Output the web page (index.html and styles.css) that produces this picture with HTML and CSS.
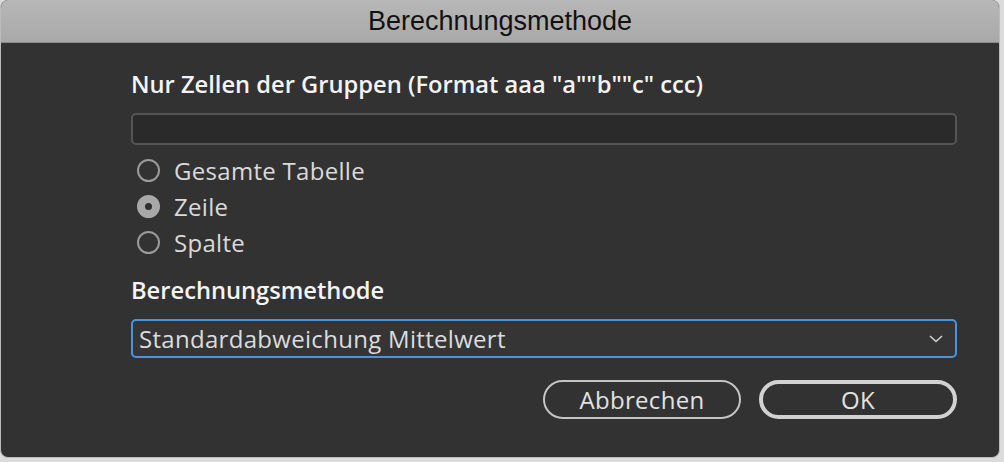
FILE: index.html
```html
<!DOCTYPE html>
<html lang="de">
<head>
    <meta charset="UTF-8">
    <title>Berechnungsmethode</title>
    <link rel="stylesheet" href="styles.css">
</head>
<body>

<div class="window">
    <div class="title-bar">Berechnungsmethode</div>

    <div class="dialog-body">
        <div class="field-label">Nur Zellen der Gruppen (Format aaa "a""b""c" ccc)</div>
        <div class="text-input"></div>

        <div class="radio-group">
            <div class="radio-row">
                <span class="radio"></span> Gesamte Tabelle
            </div>
            <div class="radio-row">
                <span class="radio checked"></span> Zeile
            </div>
            <div class="radio-row">
                <span class="radio"></span> Spalte
            </div>
        </div>

        <div class="field-label second">Berechnungsmethode</div>
        <div class="select-box">
            <span>Standardabweichung Mittelwert</span>
            <svg class="chevron" width="14" height="8" viewBox="0 0 14 8">
                <path d="M1 1 L7 6.5 L13 1" fill="none" stroke="#d0d0d0" stroke-width="1.6"/>
            </svg>
        </div>

        <div class="button-row">
            <div class="btn">Abbrechen</div>
            <div class="btn default">OK</div>
        </div>
    </div>
</div>

</body>
</html>
```

FILE: styles.css
```css
body {
    margin: 0;
    padding: 0;
    background-color: #dcdcdc;
    font-family: 'Open Sans', 'Liberation Sans', sans-serif;
}

.window {
    width: 998px;
    height: 457px;
    border: 1px solid #bcbcbc;
    border-top: none;
    border-radius: 8px;
    background-color: #323232;
    overflow: hidden;
}

.title-bar {
    height: 43px;
    line-height: 43px;
    text-align: center;
    font-family: 'Liberation Sans', sans-serif;
    font-size: 27px;
    color: #111;
    background: linear-gradient(#b7b7b7, #a9a9a9);
    border-bottom: 1px solid #8c8c8c;
    box-sizing: border-box;
}

.dialog-body {
    padding: 26px 42px 0 130px;
}

.field-label {
    font-size: 23.7px;
    font-weight: 600;
    color: #f4f4f4;
    line-height: 30px;
}

.field-label.second {
    margin-top: 15px;
}

.text-input {
    margin-top: 14px;
    height: 32px;
    border: 2px solid #555;
    border-radius: 5px;
    background-color: #2a2a2a;
    box-sizing: border-box;
}

.radio-group {
    margin-top: 7px;
    padding-left: 6px;
}

.radio-row {
    display: flex;
    align-items: center;
    gap: 14px;
    height: 36px;
    font-size: 24px;
    letter-spacing: 0.3px;
    color: #dadada;
}

.radio {
    width: 23px;
    height: 23px;
    border: 2px solid #9a9a9a;
    border-radius: 50%;
    box-sizing: border-box;
    position: relative;
}

.radio.checked {
    background-color: #a8a8a8;
    border-color: #a8a8a8;
}

.radio.checked::after {
    content: "";
    position: absolute;
    width: 7px;
    height: 7px;
    border-radius: 50%;
    background-color: #2e2e2e;
    left: 6px;
    top: 6px;
}

.select-box {
    margin-top: 14px;
    height: 39px;
    border: 2px solid #4a93e0;
    border-radius: 5px;
    background-color: #353535;
    box-sizing: border-box;
    display: flex;
    align-items: center;
    justify-content: space-between;
    padding: 0 12px 0 6px;
    font-size: 24px;
    letter-spacing: 0.3px;
    color: #dcdcdc;
}

.button-row {
    display: flex;
    justify-content: flex-end;
    gap: 18px;
    margin-top: 22px;
}

.btn {
    width: 198px;
    height: 39px;
    border: 2px solid #c4c4c4;
    border-radius: 20px;
    box-sizing: border-box;
    display: flex;
    align-items: center;
    justify-content: center;
    font-size: 24px;
    letter-spacing: 0.3px;
    color: #e2e2e2;
}

.btn.default {
    border: 4px solid #d2d2d2;
}
```
